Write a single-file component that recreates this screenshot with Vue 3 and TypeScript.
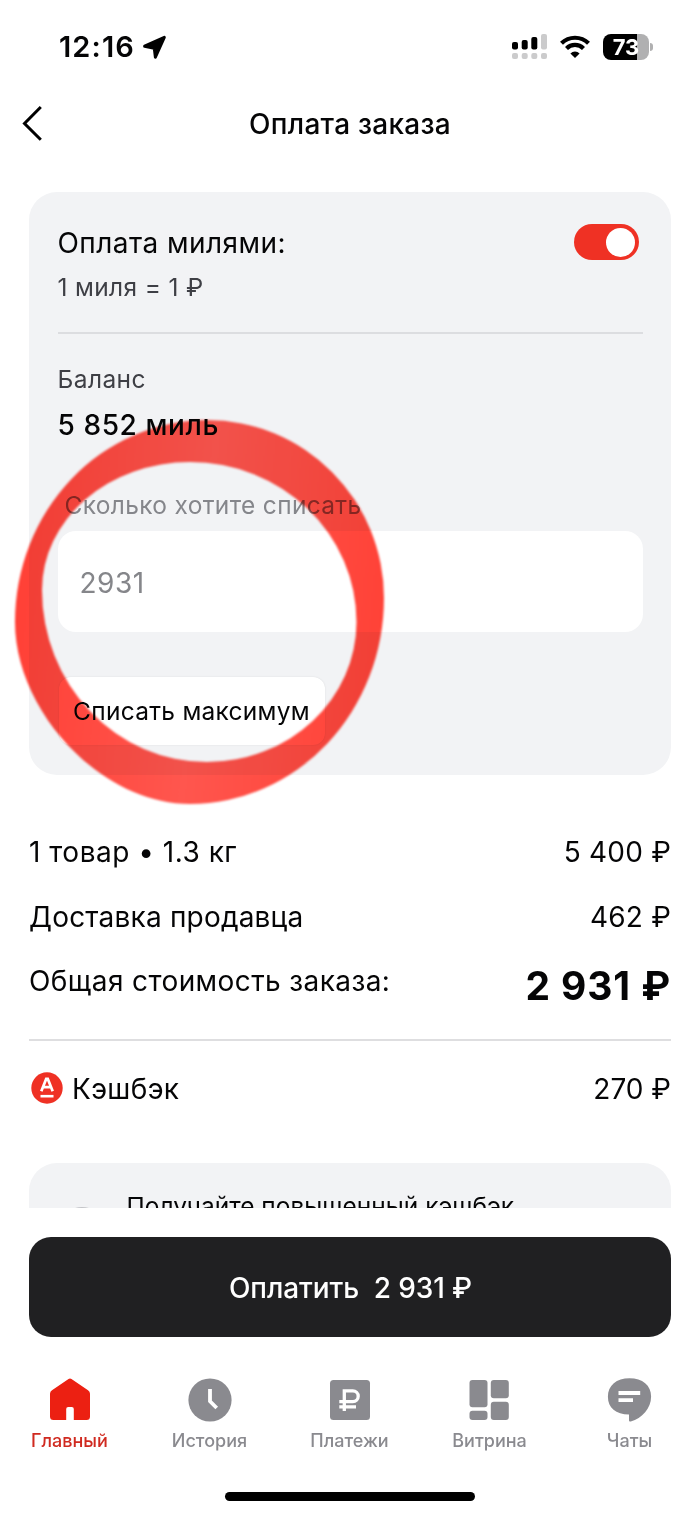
<script setup lang="ts">
interface Tab {
  id: string
  label: string
  active?: boolean
}

const tabs: Tab[] = [
  { id: 'home', label: 'Главный', active: true },
  { id: 'history', label: 'История' },
  { id: 'payments', label: 'Платежи' },
  { id: 'showcase', label: 'Витрина' },
  { id: 'chats', label: 'Чаты' },
]

// Marker ring: an outer and an inner oval, each built of quarter ellipses of unequal radii.
const outer = 'M207 420A177 178 0 0 1 384 598A194 206 0 0 1 190 804C101 804 15 711 15 622A192 202 0 0 1 207 420Z'
const inner = 'M190 462A166.5 160 0 0 1 356.5 622A149.5 140 0 0 1 207 762A165 172 0 0 1 42 590A148 128 0 0 1 190 462Z'
const ring = outer + inner
</script>

<template>
  <div class="screen">
    <header class="status">
      <div class="clock">
        <span class="time">12:16</span>
        <svg width="26" height="26" viewBox="0 0 26 26">
          <path d="M2.600 12.200 22.300 3.400 13.400 23.200 12.300 14.200z" stroke="#000" stroke-width="3" stroke-linejoin="round" />
        </svg>
      </div>
      <div class="indicators">
        <svg width="36" height="26" viewBox="0 0 36 26">
          <rect x="0" y="8" width="6" height="7.500" rx="2" />
          <rect x="9.700" y="6" width="6" height="9.500" rx="2" />
          <rect x="19.300" y="3" width="6" height="12.500" rx="2" />
          <g fill="#cbcbcc">
            <rect x="29" y="0" width="6" height="15.500" rx="2" />
            <rect x="0" y="19" width="6" height="6" rx="2" />
            <rect x="9.700" y="19" width="6" height="6" rx="2" />
            <rect x="19.300" y="19" width="6" height="6" rx="2" />
            <rect x="29" y="19" width="6" height="6" rx="2" />
          </g>
        </svg>
        <svg class="wifi" width="30" height="24" viewBox="0 0 30 24">
          <g fill="none" stroke="#000" stroke-width="4.200">
            <path d="M1.500 8.300a19.200 19.200 0 0 1 27 0" />
            <path d="M6.500 13.500a12 12 0 0 1 17 0" />
          </g>
          <path d="M15 23l-4.600-4.600a6.500 6.500 0 0 1 9.200 0z" />
        </svg>
        <div class="battery"><span>73</span></div>
        <div class="battery-tip"></div>
      </div>
    </header>

    <nav class="titlebar">
      <svg class="back" width="24" height="40" viewBox="0 0 24 40">
        <path d="M20.800 3 4.500 19.500l16.300 16.300" fill="none" stroke="#000" stroke-width="3" />
      </svg>
      <h1>Оплата заказа</h1>
    </nav>

    <main class="content">
      <section class="miles">
        <div class="miles-head">
          <div>
            <div class="t28 miles-title">Оплата милями:</div>
            <div class="t24 rate">1 миля = 1 ₽</div>
          </div>
          <div class="toggle"><i></i></div>
        </div>
        <div class="t24 balance-label">Баланс</div>
        <div class="t28 balance">5 852 миль</div>
        <div class="t24 field-label">Сколько хотите списать</div>
        <div class="field t28">2931</div>
        <button class="max t24" type="button">Списать максимум</button>
      </section>

      <section class="summary">
        <div class="row"><span class="goods">1 товар • 1.3 кг</span><span class="sum">5 400 ₽</span></div>
        <div class="row"><span class="delivery">Доставка продавца</span><span class="sum">462 ₽</span></div>
        <div class="row"><span class="all">Общая стоимость заказа:</span><strong>2 931 ₽</strong></div>
      </section>

      <div class="cashback">
        <svg width="32" height="32" viewBox="0 0 32 32">
          <circle cx="16" cy="16" r="15.700" fill="#ef3124" />
          <g fill="none" stroke="#fff">
            <path d="M10.300 19.200 15.200 6.900h1.600l4.900 12.300M12.300 15.200h7.400" stroke-width="2.700" />
            <path d="M9.500 24.200h13" stroke-width="2.600" />
          </g>
        </svg>
        <span class="cashback-label">Кэшбэк</span>
        <span class="cashback-sum">270 ₽</span>
      </div>

      <section class="promo">
        <div class="promo-icon"></div>
        <div class="t24 promo-text">Получайте повышенный кэшбэк</div>
      </section>
    </main>

    <button class="pay" type="button">Оплатить&nbsp; 2 931 ₽</button>

    <nav class="tabs">
      <div v-for="tab in tabs" :key="tab.id" class="tab" :class="{ active: tab.active }">
        <svg width="44" height="44" viewBox="0 0 44 44">
          <path
            v-if="tab.id === 'home'"
            d="M20.500.9q1.500-.9 3 0L40 12.300q2 1.400 2 3.500V38.500q0 3.500-3.500 3.500H25.800V31q0-2-2-2h-3.600q-2 0-2 2v11H5.500Q2 42 2 38.500V15.800q0-2.100 2-3.500z"
          />
          <template v-else-if="tab.id === 'history'">
            <circle cx="22" cy="22" r="21.600" />
            <path class="cut" d="M22 11v12.300l6.700 6.700" stroke-width="3.800" />
          </template>
          <template v-else-if="tab.id === 'payments'">
            <rect x="2" y="2" width="40" height="40" rx="3.500" />
            <path class="cut" d="M16.300 33V12.800h8.500a5.400 5.400 0 0 1 0 10.800H11.300M11.300 28.900H28" stroke-width="3.300" />
          </template>
          <template v-else-if="tab.id === 'showcase'">
            <rect x="1.500" y="2" width="18" height="27.300" rx="3" />
            <rect x="22.800" y="2" width="18" height="18.300" rx="3" />
            <rect x="1.500" y="32.800" width="18" height="9.200" rx="3" />
            <rect x="22.800" y="23.700" width="18" height="18.300" rx="3" />
          </template>
          <template v-else>
            <path d="M21.500 .3c13 0 21.600 7 21.600 18.200 0 12-9 21.700-20.300 25-1.100.3-1.800-.2-1.800-1.300v-5.800C7.900 36.400-.1 29.800-.1 18.700-.1 7.500 8.500 .3 21.500 .3z" />
            <path class="cut" d="M10.500 15h21.700M10.500 22.200h14.500" stroke-width="3.800" />
          </template>
        </svg>
        <span>{{ tab.label }}</span>
      </div>
    </nav>

    <div class="home-bar"></div>

    <svg class="marker" width="700" height="1515" viewBox="0 0 700 1515">
      <defs>
        <linearGradient id="ink" x1="0" y1=".45" x2="1" y2=".55">
          <stop offset="0" stop-color="#ff4036" />
          <stop offset=".5" stop-color="#ff564e" />
          <stop offset="1" stop-color="#ff4237" />
        </linearGradient>
      </defs>
      <path :d="ring" fill="url(#ink)" fill-rule="evenodd" />
    </svg>
  </div>
</template>

<style>
html,
body {
  margin: 0;
  background: #fff;
}
</style>

<style scoped>
.screen {
  position: relative;
  isolation: isolate;
  display: flex;
  flex-direction: column;
  width: 700px;
  height: 1515px;
  overflow: hidden;
  background: #fff;
  color: #050506;
  font-family: Inter, 'Noto Sans', sans-serif;
  font-size: 28px;
  white-space: nowrap;
}

.screen * {
  box-sizing: border-box;
}

button {
  padding: 0;
  border: 0;
  font-family: inherit;
}

.status {
  display: flex;
  justify-content: space-between;
  height: 93px;
  padding: 0 47px 0 59px;
}

.clock,
.indicators {
  display: flex;
  align-items: center;
  height: 93px;
}

.time {
  width: 83px;
  font-size: 29px;
  font-weight: 600;
  letter-spacing: 1.1px;
}

.wifi {
  margin: 0 13px 0 12px;
}

.battery {
  display: flex;
  align-items: center;
  justify-content: center;
  width: 46px;
  height: 26px;
  border-radius: 8px;
  background: linear-gradient(90deg, #000 73.500%, #b0b0b1 73.500%);
  color: #fff;
  font-size: 22px;
  font-weight: 700;
}

.battery-tip {
  width: 3px;
  height: 8px;
  margin-left: 1px;
  border-radius: 0 4px 4px 0;
  background: #b0b0b1;
}

.titlebar {
  display: grid;
  grid-template-columns: 60px 1fr 60px;
  align-items: center;
  height: 62px;
}

.back {
  margin-left: 20px;
}

h1 {
  margin: 0;
  font-size: 28px;
  font-weight: 500;
  letter-spacing: 0.25px;
  text-align: center;
}

.content {
  height: 1053px;
  padding: 37px 29px 0;
  overflow: hidden;
}

.t28 {
  font-size: 28px;
}

.t24 {
  font-size: 24.500px;
}

.miles {
  height: 583px;
  padding: 29px 28.500px 0;
  border-radius: 28px;
  background: #f2f3f5;
}

.miles-head {
  display: flex;
  justify-content: space-between;
  height: 113px;
  padding: 3px 4px 0 0;
  border-bottom: 2px solid #dcdde0;
}

.miles-title {
  height: 40px;
  letter-spacing: 0.45px;
  line-height: 39px;
}

.rate {
  letter-spacing: 0.35px;
  line-height: 46px;
}

.rate,
.balance-label {
  color: #3e3f45;
}

.toggle {
  display: flex;
  justify-content: flex-end;
  width: 65px;
  height: 36px;
  padding: 3.500px;
  border-radius: 18px;
  background: #ef3124;
}

.toggle i {
  width: 29px;
  height: 29px;
  border-radius: 50%;
  background: #fff;
}

.balance-label {
  margin-top: 30px;
  letter-spacing: 0.4px;
  line-height: 30px;
}

.balance {
  margin-top: 10px;
  height: 41px;
  font-weight: 500;
  letter-spacing: 0.6px;
  line-height: 43px;
}

.field-label {
  margin-top: 45px;
  padding-left: 7px;
  color: #85868b;
  letter-spacing: 0.33px;
  line-height: 30px;
}

.field {
  height: 100.500px;
  margin-top: 11px;
  padding-left: 22px;
  border-radius: 18px;
  background: #fff;
  color: #85868a;
  letter-spacing: 0.5px;
  line-height: 104px;
}

.max {
  display: block;
  width: 266px;
  height: 68px;
  margin: 45.500px 0 0 1px;
  border-radius: 12px;
  background: #fff;
  box-shadow: 0 0 2px rgba(0, 0, 0, 0.1);
  color: #050506;
  letter-spacing: 0.27px;
}

.summary {
  height: 266px;
  padding-top: 44px;
  border-bottom: 2px solid #dedee0;
}

.row {
  display: flex;
  justify-content: space-between;
  height: 64.700px;
  line-height: 66px;
}

.goods {
  letter-spacing: 0.5px;
}

.delivery {
  letter-spacing: 0.2px;
}

.all {
  letter-spacing: 0.4px;
}

.sum {
  letter-spacing: 0.2px;
}

strong {
  font-size: 39px;
  font-weight: 700;
  letter-spacing: 0.9px;
  line-height: 75px;
}

.cashback {
  display: flex;
  align-items: center;
  height: 94px;
  padding-left: 2px;
}

.cashback-label {
  flex: 1;
  padding: 2px 0 0 9px;
  letter-spacing: 0.35px;
}

.cashback-sum {
  padding-top: 2px;
}

.promo {
  display: flex;
  gap: 19.500px;
  height: 140px;
  margin-top: 28px;
  padding: 28px;
  border-radius: 28px;
  background: #f2f3f5;
}

.promo-icon {
  width: 50px;
  height: 50px;
  margin-top: 16px;
  border-radius: 50%;
  background: #c3c4c8;
}

.promo-text {
  line-height: 30px;
}

.pay {
  flex: none;
  height: 100px;
  margin: 29px 29px 0;
  padding: 2px 0 0 1px;
  border-radius: 22px;
  background: #202022;
  color: #fff;
  font-size: 28px;
  font-weight: 500;
  letter-spacing: -0.1px;
}

.tabs {
  display: grid;
  grid-template-columns: repeat(5, 140px);
  height: 155px;
  padding-top: 41px;
}

.tab {
  display: flex;
  flex-direction: column;
  align-items: center;
  color: #8a8a8f;
  font-size: 18px;
  font-weight: 500;
}

.tab svg {
  overflow: visible;
  fill: #8a8a8f;
}

.tab span {
  margin: 8px 1px 0 0;
  line-height: 22px;
}

.tab.active {
  color: #d02a20;
}

.tab.active svg {
  fill: #ec2012;
}

.cut {
  fill: none;
  stroke: #fff;
}

.home-bar {
  flex: none;
  width: 250px;
  height: 9px;
  margin: 0 auto;
  border-radius: 5px;
  background: #000;
}

.marker {
  position: absolute;
  top: 0;
  left: 0;
  mix-blend-mode: multiply;
  filter: blur(0.8px);
}
</style>
